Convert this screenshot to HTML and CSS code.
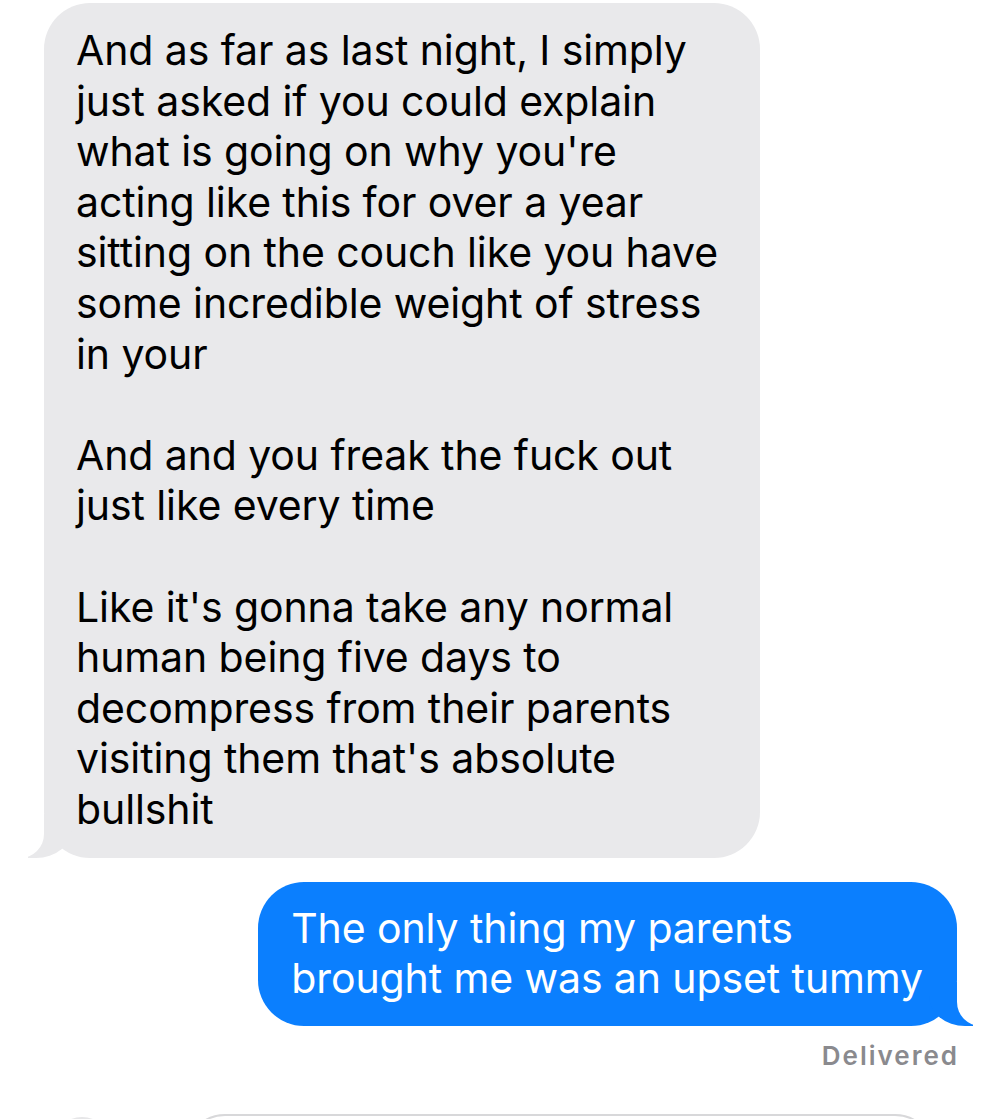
FILE: index.html
```html
<!DOCTYPE html>
<html>
<head>
<meta charset="utf-8">
<link rel="stylesheet" href="styles.css">
</head>
<body>
<div class="thread">
  <div class="row row-left">
    <div class="bubble bubble-them">
      <p>And as far as last night, I simply<br>just asked if you could explain<br>what is going on why you're<br>acting like this for over a year<br>sitting on the couch like you have<br>some incredible weight of stress<br>in your</p>
      <p>And and you freak the fuck out<br>just like every time</p>
      <p>Like it's gonna take any normal<br>human being five days to<br>decompress from their parents<br>visiting them that's absolute<br>bullshit</p>
    </div>
  </div>
  <div class="row row-right">
    <div class="bubble bubble-me">
      <p>The only thing my parents<br>brought me was an upset tummy</p>
    </div>
  </div>
  <div class="status">Delivered</div>
  <div class="composer">
    <div class="plus"></div>
    <div class="field"></div>
  </div>
</div>
</body>
</html>
```
FILE: styles.css
```css
html, body {
  margin: 0;
  padding: 0;
  background: #ffffff;
  overflow: hidden;
}
body {
  width: 1000px;
  height: 1119px;
  font-family: "Inter", "Liberation Sans", sans-serif;
}
.thread {
  display: flex;
  flex-direction: column;
  padding-top: 3px;
}
.row {
  display: flex;
}
.row-left {
  justify-content: flex-start;
  padding-left: 44px;
}
.row-right {
  justify-content: flex-end;
  padding-right: 43px;
  margin-top: 24px;
}
.bubble {
  position: relative;
  border-radius: 46px;
  font-size: 41px;
  line-height: 50.6px;
  letter-spacing: -0.1px;
}
.bubble p {
  margin: 0;
}
.bubble p + p {
  margin-top: 50.6px;
}
.bubble-them {
  width: 716px;
  box-sizing: border-box;
  background: #e9e9eb;
  color: #000000;
  padding: 22px 20px 23px 32px;
}
.bubble-them::before {
  content: "";
  position: absolute;
  bottom: 0;
  left: -16px;
  width: 44px;
  height: 44px;
  background: #e9e9eb;
  border-bottom-right-radius: 36px 30px;
}
.bubble-them::after {
  content: "";
  position: absolute;
  bottom: 0;
  left: -50px;
  width: 50px;
  height: 46px;
  background: #ffffff;
  border-bottom-right-radius: 24px;
}
.bubble-me {
  background: #0b7ffe;
  color: #ffffff;
  padding: 21px 34px 22px 33px;
}
.bubble-me::before {
  content: "";
  position: absolute;
  bottom: 0;
  right: -16px;
  width: 44px;
  height: 44px;
  background: #0b7ffe;
  border-bottom-left-radius: 36px 30px;
}
.bubble-me::after {
  content: "";
  position: absolute;
  bottom: 0;
  right: -50px;
  width: 50px;
  height: 46px;
  background: #ffffff;
  border-bottom-left-radius: 24px;
}
.status {
  align-self: flex-end;
  margin-right: 41px;
  margin-top: 14px;
  font-size: 26px;
  font-weight: 600;
  letter-spacing: 2px;
  color: #8a8a8e;
  line-height: 32px;
}
.composer {
  display: flex;
  align-items: flex-start;
  margin-top: 42px;
  padding-left: 52px;
}
.plus {
  width: 60px;
  height: 60px;
  border-radius: 50%;
  background: #e6e6e8;
  margin-top: 3px;
}
.field {
  margin-left: 73px;
  width: 750px;
  height: 80px;
  box-sizing: border-box;
  border: 2px solid #d8d8da;
  border-radius: 40px;
}
```
